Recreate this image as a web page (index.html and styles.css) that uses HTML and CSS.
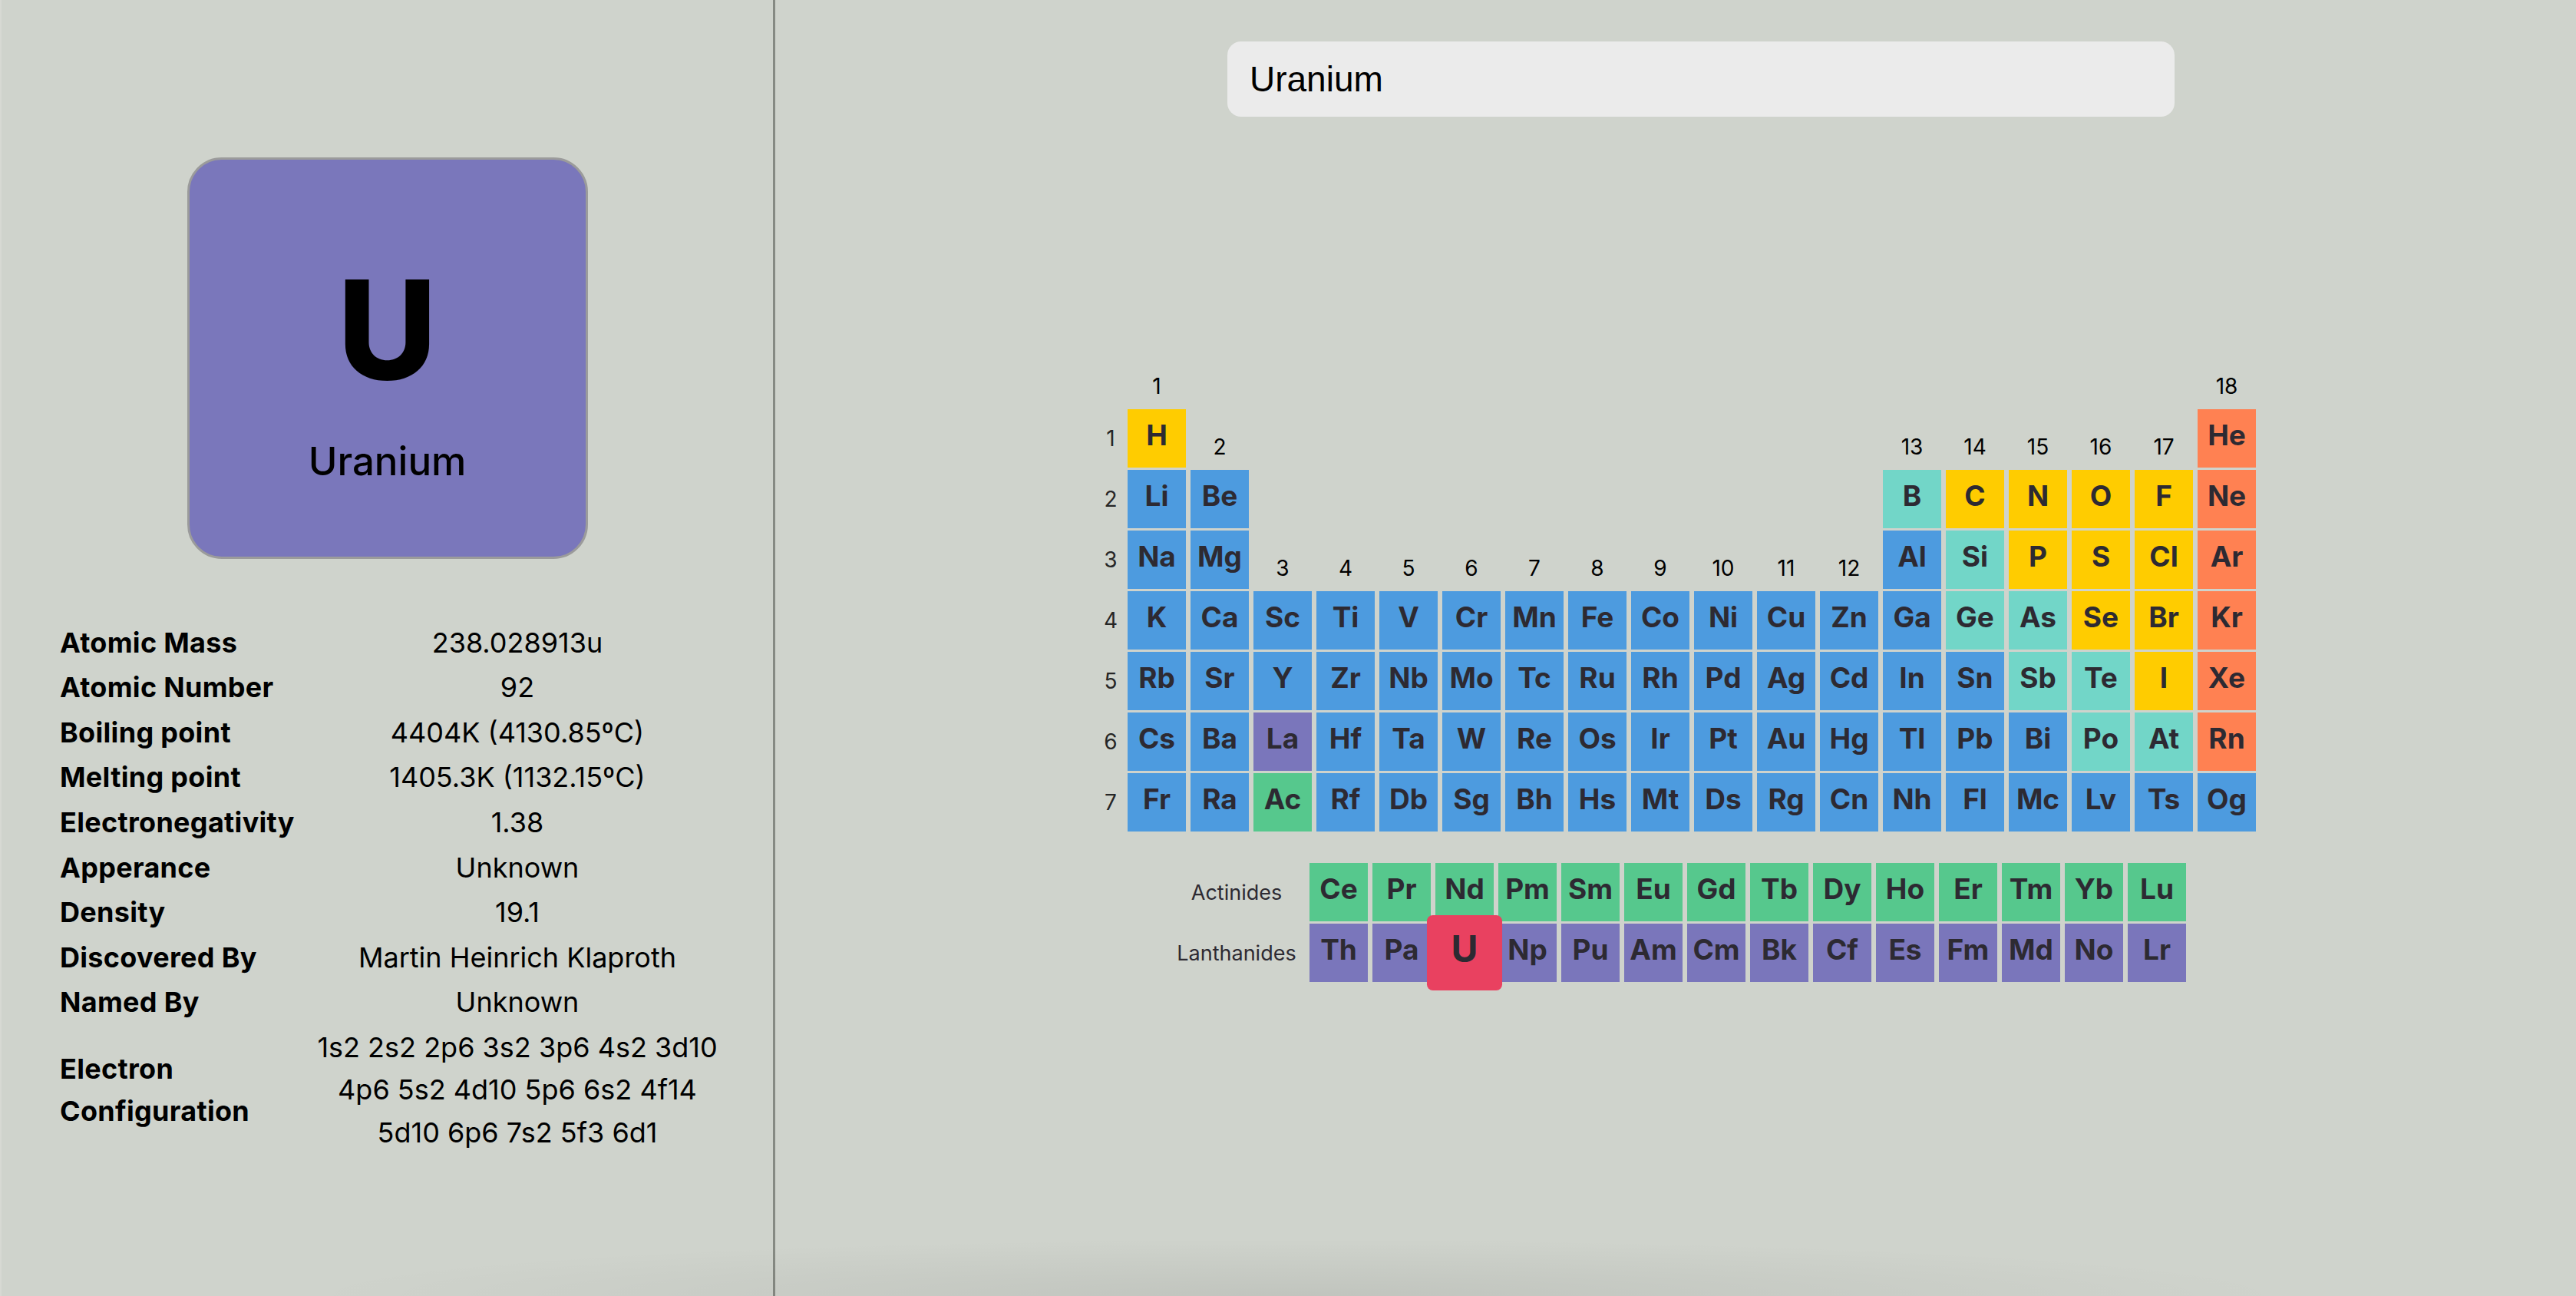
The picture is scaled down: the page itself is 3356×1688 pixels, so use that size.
FILE: index.html
```html
<!DOCTYPE html>
<html lang="en">
<head>
<meta charset="utf-8">
<title>Periodic Table</title>
<link rel="stylesheet" href="styles.css">
</head>
<body>
<div class="app">
  <aside class="sidebar">
    <div class="card">
      <div class="card-symbol">U</div>
      <div class="card-name">Uranium</div>
    </div>
    <div class="props">
      <div class="prop-label">Atomic Mass</div><div class="prop-value">238.028913u</div>
      <div class="prop-label">Atomic Number</div><div class="prop-value">92</div>
      <div class="prop-label">Boiling point</div><div class="prop-value">4404K (4130.85ºC)</div>
      <div class="prop-label">Melting point</div><div class="prop-value">1405.3K (1132.15ºC)</div>
      <div class="prop-label">Electronegativity</div><div class="prop-value">1.38</div>
      <div class="prop-label">Apperance</div><div class="prop-value">Unknown</div>
      <div class="prop-label">Density</div><div class="prop-value">19.1</div>
      <div class="prop-label">Discovered By</div><div class="prop-value">Martin Heinrich Klaproth</div>
      <div class="prop-label">Named By</div><div class="prop-value">Unknown</div>
      <div class="prop-label">Electron<br>Configuration</div><div class="prop-value">1s2 2s2 2p6 3s2 3p6 4s2 3d10<br>4p6 5s2 4d10 5p6 6s2 4f14<br>5d10 6p6 7s2 5f3 6d1</div>
    </div>
  </aside>
  <main class="main">
    <input class="search" type="text" value="Uranium">
    <div class="ptable">
      <div class="rl"></div><div class="gl">1</div><div></div><div></div><div></div><div></div><div></div><div></div><div></div><div></div><div></div><div></div><div></div><div></div><div></div><div></div><div></div><div></div><div class="gl">18</div>

      <div class="rl">1</div><div class="el y">H</div><div class="gl">2</div><div></div><div></div><div></div><div></div><div></div><div></div><div></div><div></div><div></div><div></div><div class="gl">13</div><div class="gl">14</div><div class="gl">15</div><div class="gl">16</div><div class="gl">17</div><div class="el o">He</div>

      <div class="rl">2</div><div class="el b">Li</div><div class="el b">Be</div><div></div><div></div><div></div><div></div><div></div><div></div><div></div><div></div><div></div><div></div><div class="el t">B</div><div class="el y">C</div><div class="el y">N</div><div class="el y">O</div><div class="el y">F</div><div class="el o">Ne</div>

      <div class="rl">3</div><div class="el b">Na</div><div class="el b">Mg</div><div class="gl">3</div><div class="gl">4</div><div class="gl">5</div><div class="gl">6</div><div class="gl">7</div><div class="gl">8</div><div class="gl">9</div><div class="gl">10</div><div class="gl">11</div><div class="gl">12</div><div class="el b">Al</div><div class="el t">Si</div><div class="el y">P</div><div class="el y">S</div><div class="el y">Cl</div><div class="el o">Ar</div>

      <div class="rl">4</div><div class="el b">K</div><div class="el b">Ca</div><div class="el b">Sc</div><div class="el b">Ti</div><div class="el b">V</div><div class="el b">Cr</div><div class="el b">Mn</div><div class="el b">Fe</div><div class="el b">Co</div><div class="el b">Ni</div><div class="el b">Cu</div><div class="el b">Zn</div><div class="el b">Ga</div><div class="el t">Ge</div><div class="el t">As</div><div class="el y">Se</div><div class="el y">Br</div><div class="el o">Kr</div>

      <div class="rl">5</div><div class="el b">Rb</div><div class="el b">Sr</div><div class="el b">Y</div><div class="el b">Zr</div><div class="el b">Nb</div><div class="el b">Mo</div><div class="el b">Tc</div><div class="el b">Ru</div><div class="el b">Rh</div><div class="el b">Pd</div><div class="el b">Ag</div><div class="el b">Cd</div><div class="el b">In</div><div class="el b">Sn</div><div class="el t">Sb</div><div class="el t">Te</div><div class="el y">I</div><div class="el o">Xe</div>

      <div class="rl">6</div><div class="el b">Cs</div><div class="el b">Ba</div><div class="el p">La</div><div class="el b">Hf</div><div class="el b">Ta</div><div class="el b">W</div><div class="el b">Re</div><div class="el b">Os</div><div class="el b">Ir</div><div class="el b">Pt</div><div class="el b">Au</div><div class="el b">Hg</div><div class="el b">Tl</div><div class="el b">Pb</div><div class="el b">Bi</div><div class="el t">Po</div><div class="el t">At</div><div class="el o">Rn</div>

      <div class="rl">7</div><div class="el b">Fr</div><div class="el b">Ra</div><div class="el g">Ac</div><div class="el b">Rf</div><div class="el b">Db</div><div class="el b">Sg</div><div class="el b">Bh</div><div class="el b">Hs</div><div class="el b">Mt</div><div class="el b">Ds</div><div class="el b">Rg</div><div class="el b">Cn</div><div class="el b">Nh</div><div class="el b">Fl</div><div class="el b">Mc</div><div class="el b">Lv</div><div class="el b">Ts</div><div class="el b">Og</div>
    </div>
    <div class="fblock">
      <div class="fl">Actinides</div><div class="el g">Ce</div><div class="el g">Pr</div><div class="el g">Nd</div><div class="el g">Pm</div><div class="el g">Sm</div><div class="el g">Eu</div><div class="el g">Gd</div><div class="el g">Tb</div><div class="el g">Dy</div><div class="el g">Ho</div><div class="el g">Er</div><div class="el g">Tm</div><div class="el g">Yb</div><div class="el g">Lu</div>
      <div class="fl">Lanthanides</div><div class="el p">Th</div><div class="el p">Pa</div><div class="el active">U</div><div class="el p">Np</div><div class="el p">Pu</div><div class="el p">Am</div><div class="el p">Cm</div><div class="el p">Bk</div><div class="el p">Cf</div><div class="el p">Es</div><div class="el p">Fm</div><div class="el p">Md</div><div class="el p">No</div><div class="el p">Lr</div>
    </div>
  </main>
</div>
<div class="shade"></div>
</body>
</html>
```

FILE: styles.css
```css
* { box-sizing: border-box; }
html, body { margin: 0; padding: 0; }
body {
  background: #cfd3cc;
  font-family: Inter, "Noto Sans", sans-serif;
  color: #000;
  width: 3356px;
  height: 1688px;
  overflow: hidden;
  position: relative;
}
.app { display: flex; height: 1688px; }

.sidebar {
  width: 1010px;
  flex: none;
  border-left: 2px solid #d7d9d3;
  border-right: 3px solid #868a83;
  display: flex;
  flex-direction: column;
  align-items: center;
}
.card {
  margin-top: 205px;
  width: 522px;
  height: 523px;
  border: 3px solid #9b9b9b;
  border-radius: 45px;
  background: #7a77bb;
  display: flex;
  flex-direction: column;
  align-items: center;
  padding-top: 133px;
}
.card-symbol {
  font-size: 178px;
  line-height: 178px;
  height: 178px;
  font-weight: 800;
}
.card-name {
  margin-top: 56px;
  font-size: 51px;
  line-height: 51px;
  font-weight: 500;
}
.props {
  align-self: flex-start;
  margin-left: 76px;
  margin-top: 80px;
  display: grid;
  grid-template-columns: 322px 548px;
  align-items: center;
  font-size: 36px;
  line-height: 55.4px;
}
.prop-label { font-weight: 700; padding: 1.6px 0; white-space: nowrap; letter-spacing: 0.3px; }
.prop-value { text-align: center; padding: 1.6px 0; white-space: nowrap; }

.main {
  flex: 1;
  display: flex;
  flex-direction: column;
  align-items: center;
  padding: 54px 0 0 4px;
}
.search {
  align-self: flex-start;
  margin: 0 0 0 585px;
  width: 1234px;
  height: 98px;
  border: 0;
  border-radius: 18px;
  background: #ebebeb;
  font-family: "Liberation Sans", Arial, sans-serif;
  font-size: 46px;
  padding: 0 29px;
  color: #000;
  outline: none;
}
.ptable {
  margin-top: 302px;
  display: grid;
  grid-template-columns: 32px repeat(18, 76px);
  grid-auto-rows: 76px;
  gap: 3px 6px;
}
.gl {
  display: flex;
  align-items: flex-end;
  justify-content: center;
  font-size: 28px;
  line-height: 28px;
  padding-bottom: 13px;
  color: #000;
}
.rl {
  display: flex;
  align-items: center;
  justify-content: center;
  font-size: 28px;
  color: #262626;
}
.el {
  display: flex;
  align-items: center;
  justify-content: center;
  font-size: 37px;
  font-weight: 700;
  color: #2d2a32;
  padding-bottom: 9px;
}
.b { background: #4d9bdf; }
.y { background: #ffcc00; }
.t { background: #72d6c8; }
.o { background: #ff8152; }
.p { background: #7a76bb; }
.g { background: #56c88d; }
.el.active {
  background: #e94160;
  transform: scale(1.29);
  border-radius: 6px;
  position: relative;
  z-index: 1;
}
.fblock {
  margin-top: 41px;
  display: grid;
  grid-template-columns: 178px repeat(14, 76px);
  grid-auto-rows: 76px;
  gap: 3px 6px;
}
.fl {
  display: flex;
  align-items: center;
  justify-content: center;
  font-size: 27px;
  color: #2d2a32;
}
.shade {
  position: absolute;
  left: 0;
  right: 0;
  bottom: 0;
  height: 100px;
  pointer-events: none;
  background: radial-gradient(ellipse 1300px 75px at 1690px 100%, rgba(0, 0, 0, 0.07), rgba(0, 0, 0, 0) 100%);
}
```
